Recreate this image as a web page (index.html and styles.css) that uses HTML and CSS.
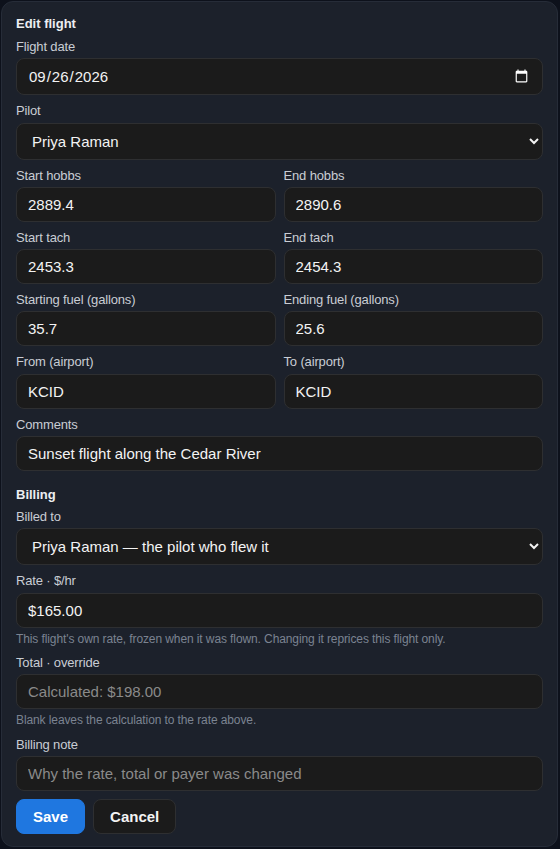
FILE: index.html
```html
<!DOCTYPE html>
<html lang="en">
<head>
<meta charset="utf-8">
<title>Edit flight</title>
<link rel="stylesheet" href="styles.css">
</head>
<body>
<form class="card">
  <h2 class="section-title">Edit flight</h2>
  <div class="field">
    <label class="label" for="date">Flight date</label>
    <input class="control control-tall" id="date" type="date" value="2026-09-26">
  </div>
  <div class="field">
    <label class="label" for="pilot">Pilot</label>
    <select class="control control-tall" id="pilot"><option>Priya Raman</option></select>
  </div>
  <div class="row">
    <div class="field">
      <label class="label">Start hobbs</label>
      <input class="control" type="text" value="2889.4">
    </div>
    <div class="field">
      <label class="label">End hobbs</label>
      <input class="control" type="text" value="2890.6">
    </div>
  </div>
  <div class="row">
    <div class="field">
      <label class="label">Start tach</label>
      <input class="control" type="text" value="2453.3">
    </div>
    <div class="field">
      <label class="label">End tach</label>
      <input class="control" type="text" value="2454.3">
    </div>
  </div>
  <div class="row">
    <div class="field">
      <label class="label">Starting fuel (gallons)</label>
      <input class="control" type="text" value="35.7">
    </div>
    <div class="field">
      <label class="label">Ending fuel (gallons)</label>
      <input class="control" type="text" value="25.6">
    </div>
  </div>
  <div class="row">
    <div class="field">
      <label class="label">From (airport)</label>
      <input class="control" type="text" value="KCID">
    </div>
    <div class="field">
      <label class="label">To (airport)</label>
      <input class="control" type="text" value="KCID">
    </div>
  </div>
  <div class="field">
    <label class="label">Comments</label>
    <input class="control" type="text" value="Sunset flight along the Cedar River">
  </div>

  <h2 class="section-title billing">Billing</h2>
  <div class="field">
    <label class="label">Billed to</label>
    <select class="control control-tall"><option>Priya Raman — the pilot who flew it</option></select>
  </div>
  <div class="field">
    <label class="label">Rate · $/hr</label>
    <input class="control" type="text" value="$165.00">
    <p class="hint">This flight's own rate, frozen when it was flown. Changing it reprices this flight only.</p>
  </div>
  <div class="field">
    <label class="label">Total · override</label>
    <input class="control" type="text" placeholder="Calculated: $198.00">
    <p class="hint">Blank leaves the calculation to the rate above.</p>
  </div>
  <div class="field">
    <label class="label">Billing note</label>
    <input class="control" type="text" placeholder="Why the rate, total or payer was changed">
  </div>
  <div class="actions">
    <button type="button" class="btn btn-primary">Save</button>
    <button type="button" class="btn btn-secondary">Cancel</button>
  </div>
</form>
</body>
</html>
```

FILE: styles.css
```css
html, body {
  margin: 0;
  background: #0d111b;
}

body {
  padding: 1px 2px 0 1px;
  font-family: "Liberation Sans", Arial, sans-serif;
  color: #e6e8ec;
}

.card {
  display: flex;
  flex-direction: column;
  gap: 8px;
  background: #1c212b;
  border: 1px solid #262c38;
  border-radius: 12px;
  padding: 15px 14px 12px 14px;
}

.section-title {
  margin: 0;
  font-size: 13px;
  font-weight: 700;
  line-height: 14px;
  color: #eceef2;
}

.section-title.billing {
  margin-top: 10px;
  line-height: 12px;
}

.field {
  display: flex;
  flex-direction: column;
  gap: 4px;
  min-width: 0;
}

.label {
  font-size: 13px;
  line-height: 15.3px;
  letter-spacing: -0.15px;
  color: #c9cdd4;
}

.row {
  display: grid;
  grid-template-columns: 1fr 1fr;
  column-gap: 8px;
}

.control {
  color-scheme: dark;
  box-sizing: border-box;
  width: 100%;
  height: 35px;
  margin: 0;
  font-family: "Liberation Sans", Arial, sans-serif;
  font-size: 15px;
  color: #f3f3f3;
  background: #1b1b1b;
  border: 1px solid #2e2f31;
  border-radius: 8px;
  padding: 0 11px;
  outline: none;
}

.control-tall {
  height: 37px;
}

.control::placeholder {
  color: #8a8a8a;
}

.hint {
  margin: 0;
  font-size: 12px;
  line-height: 15.5px;
  letter-spacing: -0.1px;
  color: #7b8391;
}

.actions {
  display: flex;
  gap: 8px;
}

.btn {
  font-family: "Liberation Sans", Arial, sans-serif;
  font-size: 15px;
  font-weight: 700;
  line-height: 17px;
  padding: 8px 16px;
  border-radius: 8px;
  cursor: pointer;
}

.btn-primary {
  background: #1f77e0;
  border: 1px solid #1f77e0;
  color: #ffffff;
}

.btn-secondary {
  background: #1b1b1b;
  border: 1px solid #2e2f31;
  color: #f3f3f3;
}
```
